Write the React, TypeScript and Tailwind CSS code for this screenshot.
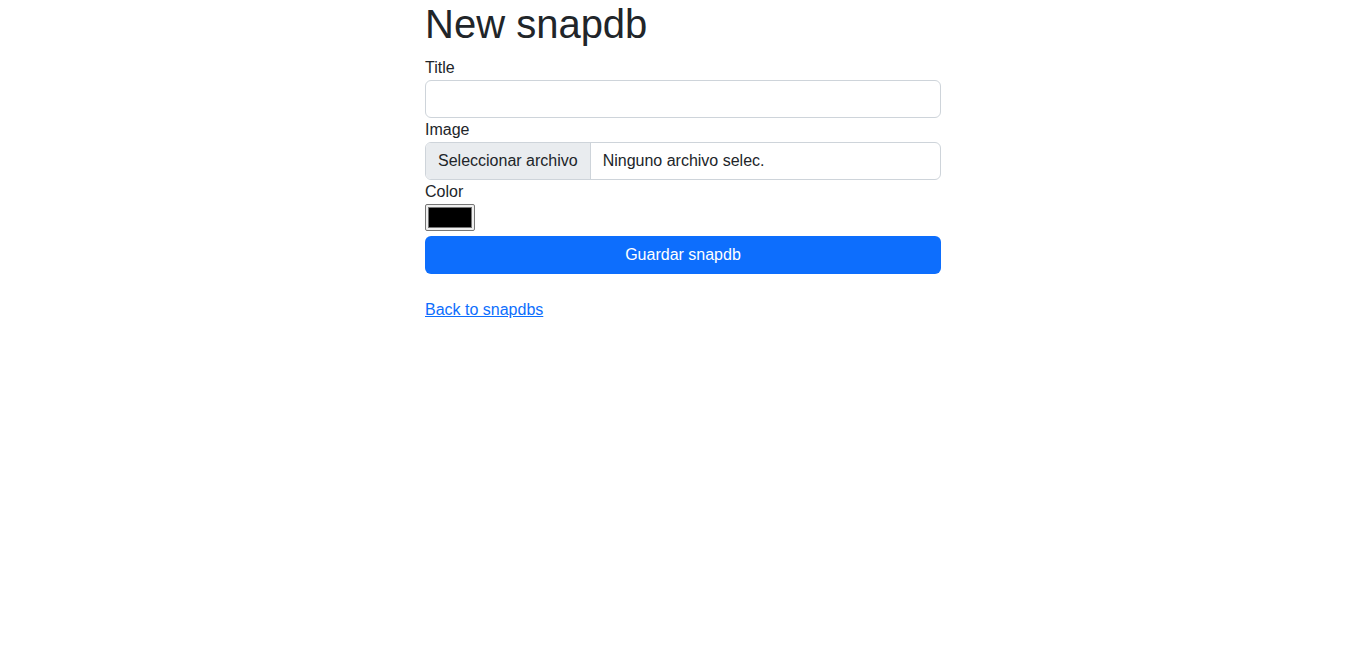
export default function App() {
  return (
    <div className="min-h-screen bg-white text-[#212529] font-['Liberation_Sans',Arial,sans-serif] text-base leading-6">
      <div className="ml-[calc(50%-258.5px)] w-[516px]">
        <h1 className="text-[40px] leading-[48px] font-normal mb-2">New snapdb</h1>

        <form onSubmit={(e) => e.preventDefault()}>
          <div>
            <label className="block">Title</label>
            <input
              type="text"
              className="block w-full h-[38px] px-3 border border-[#ced4da] rounded-md bg-white outline-none"
            />
          </div>

          <div>
            <label className="block">Image</label>
            <div className="flex h-[38px] w-full border border-[#ced4da] rounded-md overflow-hidden">
              <span className="flex items-center px-3 bg-[#e9ecef] border-r border-[#ced4da]">
                Seleccionar archivo
              </span>
              <span className="flex items-center px-3">Ninguno archivo selec.</span>
            </div>
          </div>

          <div>
            <label className="block">Color</label>
            <div className="w-[50px] h-[27px] border border-[#767676] rounded-[2px] bg-[#efefef] p-[2px]">
              <div className="w-full h-full bg-black border border-[#777]" />
            </div>
          </div>

          <button
            type="submit"
            className="mt-[5px] w-full h-[38px] rounded-md bg-[#0d6efd] text-white"
          >
            Guardar snapdb
          </button>
        </form>

        <div className="mt-[24px]">
          <a href="#" className="text-[#0d6efd] underline">
            Back to snapdbs
          </a>
        </div>
      </div>
    </div>
  );
}
